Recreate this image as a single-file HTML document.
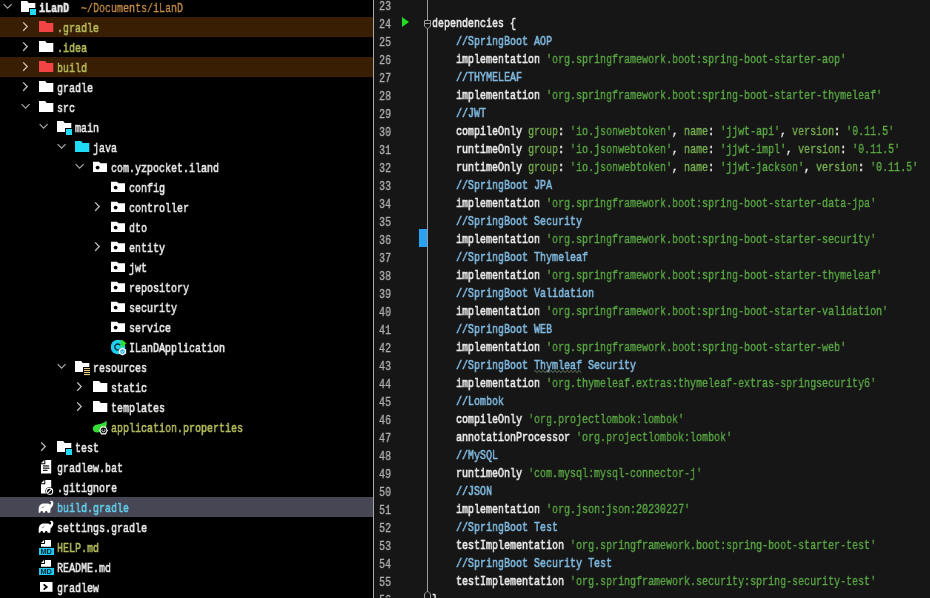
<!DOCTYPE html>
<html><head><meta charset="utf-8"><style>
html,body{margin:0;padding:0;background:#000;width:930px;height:598px;overflow:hidden}
#side{position:absolute;left:0;top:0;width:373px;height:598px;background:#000;overflow:hidden}
.row{position:absolute;left:0;width:373px;height:20px}
.ic{position:absolute;top:4px;width:16px;height:16px}
.tx{position:absolute;top:2px;height:20px;line-height:20px;white-space:pre;font-family:"Liberation Mono", monospace;font-size:13.5px;transform:scaleX(0.74074);transform-origin:0 0;-webkit-text-stroke-width:0.6px;will-change:transform}
#border{position:absolute;left:373px;top:0;width:1px;height:598px;background:#a8a8a8}
#ed{position:absolute;left:374px;top:0;width:556px;height:598px;background:#161616;overflow:hidden}
.ln{position:absolute;left:5px;margin-top:3px;width:20px;height:18px;line-height:18px;font-family:"Liberation Mono", monospace;font-size:12px;color:#b0b0b0;transform:scaleX(0.83333);transform-origin:0 0;-webkit-text-stroke-width:0.3px;will-change:transform}
.cl{position:absolute;left:58px;margin-top:2px;height:18px;line-height:18px;white-space:pre;font-family:"Liberation Mono", monospace;font-size:13.5px;transform:scaleX(0.74074);transform-origin:0 0;-webkit-text-stroke-width:0.6px;will-change:transform}
#fold{position:absolute;left:53px;top:0;width:1px;height:598px;background:#9a9a9a}
</style></head><body>
<div id="side">
<div class="row" style="top:-3px;"><svg width="10" height="7" viewBox="0 0 10 7" style="position:absolute;left:3px;top:6px"><path d="M0.6 1.2L4.6 5.2L8.6 1.2" stroke="#a8a8a8" stroke-width="1.15" fill="none"/></svg><div class="ic" style="left:21px"><svg width="16" height="15" viewBox="0 0 16 15" style="position:absolute;left:0;top:0"><path d="M0 0H6.2L7.7 2H14.3V7H8V11H0Z" fill="#ffffff"/><rect x="9" y="8" width="6" height="6" fill="#22d8f2"/></svg></div><div class="tx" style="left:39px;color:#eaeaea;font-weight:bold">iLanD<span style="font-weight:normal;color:#c98f48;-webkit-text-stroke-width:0.3px">  ~/Documents/iLanD</span></div></div><div class="row" style="top:17px;background:#3a1e03;"><svg width="8" height="12" viewBox="0 0 8 12" style="position:absolute;left:22px;top:4px"><path d="M1.2 1.4L5.2 5.6L1.2 9.8" stroke="#d6c6b4" stroke-width="1.25" fill="none"/></svg><div class="ic" style="left:39px"><svg width="15" height="12" viewBox="0 0 15 12" style="position:absolute;left:0;top:0"><path d="M0 0H6.2L7.7 2H14.3V11H0Z" fill="#f24444"/></svg></div><div class="tx" style="left:57px;color:#b4bb5c;font-weight:normal">.gradle</div></div><div class="row" style="top:37px;"><svg width="8" height="12" viewBox="0 0 8 12" style="position:absolute;left:22px;top:4px"><path d="M1.2 1.4L5.2 5.6L1.2 9.8" stroke="#c4c4c4" stroke-width="1.25" fill="none"/></svg><div class="ic" style="left:39px"><svg width="15" height="12" viewBox="0 0 15 12" style="position:absolute;left:0;top:0"><path d="M0 0H6.2L7.7 2H14.3V11H0Z" fill="#ffffff"/></svg></div><div class="tx" style="left:57px;color:#b4bb5c;font-weight:normal">.idea</div></div><div class="row" style="top:57px;background:#3a1e03;"><svg width="8" height="12" viewBox="0 0 8 12" style="position:absolute;left:22px;top:4px"><path d="M1.2 1.4L5.2 5.6L1.2 9.8" stroke="#d6c6b4" stroke-width="1.25" fill="none"/></svg><div class="ic" style="left:39px"><svg width="15" height="12" viewBox="0 0 15 12" style="position:absolute;left:0;top:0"><path d="M0 0H6.2L7.7 2H14.3V11H0Z" fill="#f24444"/></svg></div><div class="tx" style="left:57px;color:#b4bb5c;font-weight:normal">build</div></div><div class="row" style="top:77px;"><svg width="8" height="12" viewBox="0 0 8 12" style="position:absolute;left:22px;top:4px"><path d="M1.2 1.4L5.2 5.6L1.2 9.8" stroke="#c4c4c4" stroke-width="1.25" fill="none"/></svg><div class="ic" style="left:39px"><svg width="15" height="12" viewBox="0 0 15 12" style="position:absolute;left:0;top:0"><path d="M0 0H6.2L7.7 2H14.3V11H0Z" fill="#ffffff"/></svg></div><div class="tx" style="left:57px;color:#eaeaea;font-weight:normal">gradle</div></div><div class="row" style="top:97px;"><svg width="10" height="7" viewBox="0 0 10 7" style="position:absolute;left:21px;top:6px"><path d="M0.6 1.2L4.6 5.2L8.6 1.2" stroke="#a8a8a8" stroke-width="1.15" fill="none"/></svg><div class="ic" style="left:39px"><svg width="15" height="12" viewBox="0 0 15 12" style="position:absolute;left:0;top:0"><path d="M0 0H6.2L7.7 2H14.3V11H0Z" fill="#ffffff"/></svg></div><div class="tx" style="left:57px;color:#eaeaea;font-weight:normal">src</div></div><div class="row" style="top:117px;"><svg width="10" height="7" viewBox="0 0 10 7" style="position:absolute;left:39px;top:6px"><path d="M0.6 1.2L4.6 5.2L8.6 1.2" stroke="#a8a8a8" stroke-width="1.15" fill="none"/></svg><div class="ic" style="left:57px"><svg width="16" height="15" viewBox="0 0 16 15" style="position:absolute;left:0;top:0"><path d="M0 0H6.2L7.7 2H14.3V7H8V11H0Z" fill="#ffffff"/><rect x="9" y="8" width="6" height="6" fill="#22d8f2"/></svg></div><div class="tx" style="left:75px;color:#eaeaea;font-weight:normal">main</div></div><div class="row" style="top:137px;"><svg width="10" height="7" viewBox="0 0 10 7" style="position:absolute;left:57px;top:6px"><path d="M0.6 1.2L4.6 5.2L8.6 1.2" stroke="#a8a8a8" stroke-width="1.15" fill="none"/></svg><div class="ic" style="left:75px"><svg width="15" height="12" viewBox="0 0 15 12" style="position:absolute;left:0;top:0"><path d="M0 0H6.2L7.7 2H14.3V11H0Z" fill="#1edcf6"/></svg></div><div class="tx" style="left:93px;color:#eaeaea;font-weight:normal">java</div></div><div class="row" style="top:157px;"><svg width="10" height="7" viewBox="0 0 10 7" style="position:absolute;left:75px;top:6px"><path d="M0.6 1.2L4.6 5.2L8.6 1.2" stroke="#a8a8a8" stroke-width="1.15" fill="none"/></svg><div class="ic" style="left:93px"><svg width="15" height="12" viewBox="0 0 15 12" style="position:absolute;left:0;top:0"><path d="M0 0.8H6L7.5 2.3H14V11H0Z" fill="#ffffff"/><circle cx="4.6" cy="6.6" r="1.9" fill="#000"/></svg></div><div class="tx" style="left:111px;color:#eaeaea;font-weight:normal">com.yzpocket.iland</div></div><div class="row" style="top:177px;"><div class="ic" style="left:111px"><svg width="15" height="12" viewBox="0 0 15 12" style="position:absolute;left:0;top:0"><path d="M0 0.8H6L7.5 2.3H14V11H0Z" fill="#ffffff"/><circle cx="4.6" cy="6.6" r="1.9" fill="#000"/></svg></div><div class="tx" style="left:129px;color:#eaeaea;font-weight:normal">config</div></div><div class="row" style="top:197px;"><svg width="8" height="12" viewBox="0 0 8 12" style="position:absolute;left:94px;top:4px"><path d="M1.2 1.4L5.2 5.6L1.2 9.8" stroke="#c4c4c4" stroke-width="1.25" fill="none"/></svg><div class="ic" style="left:111px"><svg width="15" height="12" viewBox="0 0 15 12" style="position:absolute;left:0;top:0"><path d="M0 0.8H6L7.5 2.3H14V11H0Z" fill="#ffffff"/><circle cx="4.6" cy="6.6" r="1.9" fill="#000"/></svg></div><div class="tx" style="left:129px;color:#eaeaea;font-weight:normal">controller</div></div><div class="row" style="top:217px;"><div class="ic" style="left:111px"><svg width="15" height="12" viewBox="0 0 15 12" style="position:absolute;left:0;top:0"><path d="M0 0.8H6L7.5 2.3H14V11H0Z" fill="#ffffff"/><circle cx="4.6" cy="6.6" r="1.9" fill="#000"/></svg></div><div class="tx" style="left:129px;color:#eaeaea;font-weight:normal">dto</div></div><div class="row" style="top:237px;"><svg width="8" height="12" viewBox="0 0 8 12" style="position:absolute;left:94px;top:4px"><path d="M1.2 1.4L5.2 5.6L1.2 9.8" stroke="#c4c4c4" stroke-width="1.25" fill="none"/></svg><div class="ic" style="left:111px"><svg width="15" height="12" viewBox="0 0 15 12" style="position:absolute;left:0;top:0"><path d="M0 0.8H6L7.5 2.3H14V11H0Z" fill="#ffffff"/><circle cx="4.6" cy="6.6" r="1.9" fill="#000"/></svg></div><div class="tx" style="left:129px;color:#eaeaea;font-weight:normal">entity</div></div><div class="row" style="top:257px;"><div class="ic" style="left:111px"><svg width="15" height="12" viewBox="0 0 15 12" style="position:absolute;left:0;top:0"><path d="M0 0.8H6L7.5 2.3H14V11H0Z" fill="#ffffff"/><circle cx="4.6" cy="6.6" r="1.9" fill="#000"/></svg></div><div class="tx" style="left:129px;color:#eaeaea;font-weight:normal">jwt</div></div><div class="row" style="top:277px;"><div class="ic" style="left:111px"><svg width="15" height="12" viewBox="0 0 15 12" style="position:absolute;left:0;top:0"><path d="M0 0.8H6L7.5 2.3H14V11H0Z" fill="#ffffff"/><circle cx="4.6" cy="6.6" r="1.9" fill="#000"/></svg></div><div class="tx" style="left:129px;color:#eaeaea;font-weight:normal">repository</div></div><div class="row" style="top:297px;"><div class="ic" style="left:111px"><svg width="15" height="12" viewBox="0 0 15 12" style="position:absolute;left:0;top:0"><path d="M0 0.8H6L7.5 2.3H14V11H0Z" fill="#ffffff"/><circle cx="4.6" cy="6.6" r="1.9" fill="#000"/></svg></div><div class="tx" style="left:129px;color:#eaeaea;font-weight:normal">security</div></div><div class="row" style="top:317px;"><div class="ic" style="left:111px"><svg width="15" height="12" viewBox="0 0 15 12" style="position:absolute;left:0;top:0"><path d="M0 0.8H6L7.5 2.3H14V11H0Z" fill="#ffffff"/><circle cx="4.6" cy="6.6" r="1.9" fill="#000"/></svg></div><div class="tx" style="left:129px;color:#eaeaea;font-weight:normal">service</div></div><div class="row" style="top:337px;"><div class="ic" style="left:111px"><svg width="17" height="17" viewBox="0 0 17 17" style="position:absolute;left:0;top:-1px"><circle cx="7" cy="7" r="7.3" fill="#1ed0ee"/><path d="M9.2 5.2A3 3 0 1 0 9.2 8.8" stroke="#02303a" stroke-width="1.4" fill="none"/><path d="M10 -1L15.5 3.2L9.5 8.5Z" fill="#2ee02e"/><path d="M11.5 7.6L15.2 9.6V13.6L11.5 15.6L7.8 13.6V9.6Z" fill="#f4fbff"/><circle cx="11.5" cy="11.6" r="2.3" fill="#22b0cc"/><path d="M10.2 11.4L11.4 12.6L12.9 10.6" stroke="#e8ffff" stroke-width="0.9" fill="none"/></svg></div><div class="tx" style="left:129px;color:#eaeaea;font-weight:normal">ILanDApplication</div></div><div class="row" style="top:357px;"><svg width="10" height="7" viewBox="0 0 10 7" style="position:absolute;left:57px;top:6px"><path d="M0.6 1.2L4.6 5.2L8.6 1.2" stroke="#a8a8a8" stroke-width="1.15" fill="none"/></svg><div class="ic" style="left:75px"><svg width="16" height="15" viewBox="0 0 16 15" style="position:absolute;left:0;top:0"><path d="M0 0H6.2L7.7 2H14.3V6H8V11H0Z" fill="#ffffff"/><rect x="9" y="7" width="6" height="1.1" fill="#e6cc80"/><rect x="9" y="9" width="6" height="1.1" fill="#e6cc80"/><rect x="9" y="11" width="6" height="1.1" fill="#e6cc80"/><rect x="9" y="13" width="6" height="1.1" fill="#e6cc80"/></svg></div><div class="tx" style="left:93px;color:#eaeaea;font-weight:normal">resources</div></div><div class="row" style="top:377px;"><svg width="8" height="12" viewBox="0 0 8 12" style="position:absolute;left:76px;top:4px"><path d="M1.2 1.4L5.2 5.6L1.2 9.8" stroke="#c4c4c4" stroke-width="1.25" fill="none"/></svg><div class="ic" style="left:93px"><svg width="15" height="12" viewBox="0 0 15 12" style="position:absolute;left:0;top:0"><path d="M0 0H6.2L7.7 2H14.3V11H0Z" fill="#ffffff"/></svg></div><div class="tx" style="left:111px;color:#eaeaea;font-weight:normal">static</div></div><div class="row" style="top:397px;"><svg width="8" height="12" viewBox="0 0 8 12" style="position:absolute;left:76px;top:4px"><path d="M1.2 1.4L5.2 5.6L1.2 9.8" stroke="#c4c4c4" stroke-width="1.25" fill="none"/></svg><div class="ic" style="left:93px"><svg width="15" height="12" viewBox="0 0 15 12" style="position:absolute;left:0;top:0"><path d="M0 0H6.2L7.7 2H14.3V11H0Z" fill="#ffffff"/></svg></div><div class="tx" style="left:111px;color:#eaeaea;font-weight:normal">templates</div></div><div class="row" style="top:417px;"><div class="ic" style="left:93px"><svg width="17" height="16" viewBox="0 0 17 16" style="position:absolute;left:-1px;top:-1px"><path d="M2.6 11.9C-0.6 9.6 0.6 5.4 5.2 4.6C9.2 3.8 12 3.4 14.4 0.8C15.4 5 14.4 9 9.8 11.2C7.2 12.4 4.6 12.8 2.6 11.9Z" fill="#34dc34"/><path d="M9.2 6.4H13.8L15.8 10.4L13.8 14.4H9.2L7.2 10.4Z" fill="#fff"/><circle cx="11.5" cy="10.4" r="2.8" fill="#000"/><path d="M10.3 9.4A1.5 1.5 0 1 0 12.7 9.4" stroke="#fff" stroke-width="1" fill="none"/></svg></div><div class="tx" style="left:111px;color:#b4bb5c;font-weight:normal">application.properties</div></div><div class="row" style="top:437px;"><svg width="8" height="12" viewBox="0 0 8 12" style="position:absolute;left:40px;top:4px"><path d="M1.2 1.4L5.2 5.6L1.2 9.8" stroke="#c4c4c4" stroke-width="1.25" fill="none"/></svg><div class="ic" style="left:57px"><svg width="16" height="15" viewBox="0 0 16 15" style="position:absolute;left:0;top:0"><path d="M0 0H6.2L7.7 2H14.3V7H8V11H0Z" fill="#ffffff"/><rect x="9" y="8" width="6" height="6" fill="#22d8f2"/></svg></div><div class="tx" style="left:75px;color:#eaeaea;font-weight:normal">test</div></div><div class="row" style="top:457px;"><div class="ic" style="left:39px"><svg width="14" height="15" viewBox="0 0 14 15" style="position:absolute;left:2px;top:-1px"><path d="M4.3 0H10.2V13.6H0V4.3H4.3Z" fill="#fff"/><path d="M0 3.3L3.3 0V3.3Z" fill="#fff"/><rect x="2" y="5.4" width="6" height="1.1" fill="#000"/><rect x="2" y="7.6" width="6.5" height="1.1" fill="#000"/><rect x="2" y="9.8" width="4.5" height="1.1" fill="#000"/></svg></div><div class="tx" style="left:57px;color:#eaeaea;font-weight:normal">gradlew.bat</div></div><div class="row" style="top:477px;"><div class="ic" style="left:39px"><svg width="14" height="16" viewBox="0 0 14 16" style="position:absolute;left:2px;top:-1px"><path d="M4.3 0H10.2V13.6H0V4.3H4.3Z" fill="#fff"/><path d="M0 3.3L3.3 0V3.3Z" fill="#fff"/><circle cx="8.6" cy="11.2" r="4.2" fill="#000"/><circle cx="8.6" cy="11.2" r="3.1" fill="none" stroke="#fff" stroke-width="1.1"/><path d="M6.6 13.2L10.6 9.2" stroke="#fff" stroke-width="1.1"/></svg></div><div class="tx" style="left:57px;color:#eaeaea;font-weight:normal">.gitignore</div></div><div class="row" style="top:497px;background:#464654;"><div class="ic" style="left:39px"><svg width="18" height="14" viewBox="36 500 18 14" style="position:absolute;left:-3px;top:-1px"><path d="M38.7 512.7L38.7 509.5C38.7 505.5 40.5 503.4 44 503.4L47.5 503.4C48.8 503.4 49.6 504 50 504.8C50.8 504 51.3 503.2 51.2 502.4C51.1 501.8 50.6 501.7 50.2 502.1L49.7 501.6C50.3 500.8 51.4 500.6 52.3 501.1C53.4 501.8 53.6 503.2 53.2 504.6C52.8 506.2 51.5 507.5 50.6 508.6L50.2 512.7L47.6 512.7C47.6 511.6 47 511 46.2 511C45.4 511 44.8 511.6 44.8 512.7L43.1 512.7C43.1 511.6 42.5 511 41.7 511C40.9 511 40.3 511.6 40.3 512.7Z" fill="#fff"/><path d="M41.8 507.9C42.9 507.6 43.9 506.9 44.6 506" stroke="rgba(0,0,0,0.55)" stroke-width="0.8" fill="none"/></svg></div><div class="tx" style="left:57px;color:#62cdea;font-weight:normal">build.gradle</div></div><div class="row" style="top:517px;"><div class="ic" style="left:39px"><svg width="18" height="14" viewBox="36 500 18 14" style="position:absolute;left:-3px;top:-1px"><path d="M38.7 512.7L38.7 509.5C38.7 505.5 40.5 503.4 44 503.4L47.5 503.4C48.8 503.4 49.6 504 50 504.8C50.8 504 51.3 503.2 51.2 502.4C51.1 501.8 50.6 501.7 50.2 502.1L49.7 501.6C50.3 500.8 51.4 500.6 52.3 501.1C53.4 501.8 53.6 503.2 53.2 504.6C52.8 506.2 51.5 507.5 50.6 508.6L50.2 512.7L47.6 512.7C47.6 511.6 47 511 46.2 511C45.4 511 44.8 511.6 44.8 512.7L43.1 512.7C43.1 511.6 42.5 511 41.7 511C40.9 511 40.3 511.6 40.3 512.7Z" fill="#fff"/><path d="M41.8 507.9C42.9 507.6 43.9 506.9 44.6 506" stroke="rgba(0,0,0,0.55)" stroke-width="0.8" fill="none"/></svg></div><div class="tx" style="left:57px;color:#eaeaea;font-weight:normal">settings.gradle</div></div><div class="row" style="top:537px;"><div class="ic" style="left:39px"><svg width="16" height="16" viewBox="0 0 16 16" style="position:absolute;left:0;top:-1px"><path d="M5.9 0H12V6.8H2V4H5.9Z" fill="#fff"/><path d="M2 3L5 0V3Z" fill="#fff"/><rect x="0" y="8" width="15" height="7" fill="#1ec8f0"/><text x="7.2" y="14.2" font-family="Liberation Sans" font-weight="bold" font-size="7.4" text-anchor="middle" fill="#062030">MD</text></svg></div><div class="tx" style="left:57px;color:#b4bb5c;font-weight:normal">HELP.md</div></div><div class="row" style="top:557px;"><div class="ic" style="left:39px"><svg width="16" height="16" viewBox="0 0 16 16" style="position:absolute;left:0;top:-1px"><path d="M5.9 0H12V6.8H2V4H5.9Z" fill="#fff"/><path d="M2 3L5 0V3Z" fill="#fff"/><rect x="0" y="8" width="15" height="7" fill="#1ec8f0"/><text x="7.2" y="14.2" font-family="Liberation Sans" font-weight="bold" font-size="7.4" text-anchor="middle" fill="#062030">MD</text></svg></div><div class="tx" style="left:57px;color:#eaeaea;font-weight:normal">README.md</div></div><div class="row" style="top:577px;"><div class="ic" style="left:39px"><svg width="14" height="12" viewBox="0 0 14 12" style="position:absolute;left:0;top:0"><rect x="1" y="1" width="12.5" height="9.8" fill="#fff"/><path d="M4.6 3.4L7.8 6L4.6 8.6" stroke="#000" stroke-width="1.7" fill="none"/></svg></div><div class="tx" style="left:57px;color:#eaeaea;font-weight:normal">gradlew</div></div>
</div>
<div id="border"></div>
<div id="ed">
<div id="fold"></div>
<div class="ln" style="top:-5px">23</div><div class="cl" style="top:-5px"></div><div class="ln" style="top:13px">24</div><div class="cl" style="top:13px"><span style="color:#ececec">dependencies {</span></div><div class="ln" style="top:31px">25</div><div class="cl" style="top:31px"><span style="color:#80bae0">    //SpringBoot AOP</span></div><div class="ln" style="top:49px">26</div><div class="cl" style="top:49px"><span style="color:#ececec">    implementation </span><span style="color:#5aa844;-webkit-text-stroke-width:0.35px">'org.springframework.boot:spring-boot-starter-aop'</span></div><div class="ln" style="top:67px">27</div><div class="cl" style="top:67px"><span style="color:#80bae0">    //THYMELEAF</span></div><div class="ln" style="top:85px">28</div><div class="cl" style="top:85px"><span style="color:#ececec">    implementation </span><span style="color:#5aa844;-webkit-text-stroke-width:0.35px">'org.springframework.boot:spring-boot-starter-thymeleaf'</span></div><div class="ln" style="top:103px">29</div><div class="cl" style="top:103px"><span style="color:#80bae0">    //JWT</span></div><div class="ln" style="top:121px">30</div><div class="cl" style="top:121px"><span style="color:#ececec">    compileOnly </span><span style="color:#78b050;-webkit-text-stroke-width:0.35px">group</span><span style="color:#ececec">: </span><span style="color:#5aa844;-webkit-text-stroke-width:0.35px">'io.jsonwebtoken'</span><span style="color:#ececec">, </span><span style="color:#78b050;-webkit-text-stroke-width:0.35px">name</span><span style="color:#ececec">: </span><span style="color:#5aa844;-webkit-text-stroke-width:0.35px">'jjwt-api'</span><span style="color:#ececec">, </span><span style="color:#78b050;-webkit-text-stroke-width:0.35px">version</span><span style="color:#ececec">: </span><span style="color:#5aa844;-webkit-text-stroke-width:0.35px">'0.11.5'</span></div><div class="ln" style="top:139px">31</div><div class="cl" style="top:139px"><span style="color:#ececec">    runtimeOnly </span><span style="color:#78b050;-webkit-text-stroke-width:0.35px">group</span><span style="color:#ececec">: </span><span style="color:#5aa844;-webkit-text-stroke-width:0.35px">'io.jsonwebtoken'</span><span style="color:#ececec">, </span><span style="color:#78b050;-webkit-text-stroke-width:0.35px">name</span><span style="color:#ececec">: </span><span style="color:#5aa844;-webkit-text-stroke-width:0.35px">'jjwt-impl'</span><span style="color:#ececec">, </span><span style="color:#78b050;-webkit-text-stroke-width:0.35px">version</span><span style="color:#ececec">: </span><span style="color:#5aa844;-webkit-text-stroke-width:0.35px">'0.11.5'</span></div><div class="ln" style="top:157px">32</div><div class="cl" style="top:157px"><span style="color:#ececec">    runtimeOnly </span><span style="color:#78b050;-webkit-text-stroke-width:0.35px">group</span><span style="color:#ececec">: </span><span style="color:#5aa844;-webkit-text-stroke-width:0.35px">'io.jsonwebtoken'</span><span style="color:#ececec">, </span><span style="color:#78b050;-webkit-text-stroke-width:0.35px">name</span><span style="color:#ececec">: </span><span style="color:#5aa844;-webkit-text-stroke-width:0.35px">'jjwt-jackson'</span><span style="color:#ececec">, </span><span style="color:#78b050;-webkit-text-stroke-width:0.35px">version</span><span style="color:#ececec">: </span><span style="color:#5aa844;-webkit-text-stroke-width:0.35px">'0.11.5'</span></div><div class="ln" style="top:175px">33</div><div class="cl" style="top:175px"><span style="color:#80bae0">    //SpringBoot JPA</span></div><div class="ln" style="top:193px">34</div><div class="cl" style="top:193px"><span style="color:#ececec">    implementation </span><span style="color:#5aa844;-webkit-text-stroke-width:0.35px">'org.springframework.boot:spring-boot-starter-data-jpa'</span></div><div class="ln" style="top:211px">35</div><div class="cl" style="top:211px"><span style="color:#80bae0">    //SpringBoot Security</span></div><div class="ln" style="top:229px">36</div><div class="cl" style="top:229px"><span style="color:#ececec">    implementation </span><span style="color:#5aa844;-webkit-text-stroke-width:0.35px">'org.springframework.boot:spring-boot-starter-security'</span></div><div class="ln" style="top:247px">37</div><div class="cl" style="top:247px"><span style="color:#80bae0">    //SpringBoot Thymeleaf</span></div><div class="ln" style="top:265px">38</div><div class="cl" style="top:265px"><span style="color:#ececec">    implementation </span><span style="color:#5aa844;-webkit-text-stroke-width:0.35px">'org.springframework.boot:spring-boot-starter-thymeleaf'</span></div><div class="ln" style="top:283px">39</div><div class="cl" style="top:283px"><span style="color:#80bae0">    //SpringBoot Validation</span></div><div class="ln" style="top:301px">40</div><div class="cl" style="top:301px"><span style="color:#ececec">    implementation </span><span style="color:#5aa844;-webkit-text-stroke-width:0.35px">'org.springframework.boot:spring-boot-starter-validation'</span></div><div class="ln" style="top:319px">41</div><div class="cl" style="top:319px"><span style="color:#80bae0">    //SpringBoot WEB</span></div><div class="ln" style="top:337px">42</div><div class="cl" style="top:337px"><span style="color:#ececec">    implementation </span><span style="color:#5aa844;-webkit-text-stroke-width:0.35px">'org.springframework.boot:spring-boot-starter-web'</span></div><div class="ln" style="top:355px">43</div><div class="cl" style="top:355px"><span style="color:#80bae0">    //SpringBoot Thymleaf Security</span></div><div class="ln" style="top:373px">44</div><div class="cl" style="top:373px"><span style="color:#ececec">    implementation </span><span style="color:#5aa844;-webkit-text-stroke-width:0.35px">'org.thymeleaf.extras:thymeleaf-extras-springsecurity6'</span></div><div class="ln" style="top:391px">45</div><div class="cl" style="top:391px"><span style="color:#80bae0">    //Lombok</span></div><div class="ln" style="top:409px">46</div><div class="cl" style="top:409px"><span style="color:#ececec">    compileOnly </span><span style="color:#5aa844;-webkit-text-stroke-width:0.35px">'org.projectlombok:lombok'</span></div><div class="ln" style="top:427px">47</div><div class="cl" style="top:427px"><span style="color:#ececec">    annotationProcessor </span><span style="color:#5aa844;-webkit-text-stroke-width:0.35px">'org.projectlombok:lombok'</span></div><div class="ln" style="top:445px">48</div><div class="cl" style="top:445px"><span style="color:#80bae0">    //MySQL</span></div><div class="ln" style="top:463px">49</div><div class="cl" style="top:463px"><span style="color:#ececec">    runtimeOnly </span><span style="color:#5aa844;-webkit-text-stroke-width:0.35px">'com.mysql:mysql-connector-j'</span></div><div class="ln" style="top:481px">50</div><div class="cl" style="top:481px"><span style="color:#80bae0">    //JSON</span></div><div class="ln" style="top:499px">51</div><div class="cl" style="top:499px"><span style="color:#ececec">    implementation </span><span style="color:#5aa844;-webkit-text-stroke-width:0.35px">'org.json:json:20230227'</span></div><div class="ln" style="top:517px">52</div><div class="cl" style="top:517px"><span style="color:#80bae0">    //SpringBoot Test</span></div><div class="ln" style="top:535px">53</div><div class="cl" style="top:535px"><span style="color:#ececec">    testImplementation </span><span style="color:#5aa844;-webkit-text-stroke-width:0.35px">'org.springframework.boot:spring-boot-starter-test'</span></div><div class="ln" style="top:553px">54</div><div class="cl" style="top:553px"><span style="color:#80bae0">    //SpringBoot Security Test</span></div><div class="ln" style="top:571px">55</div><div class="cl" style="top:571px"><span style="color:#ececec">    testImplementation </span><span style="color:#5aa844;-webkit-text-stroke-width:0.35px">'org.springframework.security:spring-security-test'</span></div><div class="ln" style="top:589px">56</div><div class="cl" style="top:589px"><span style="color:#ececec">}</span></div>
<svg width="8" height="10" viewBox="0 0 8 10" style="position:absolute;left:28px;top:17px"><path d="M0 0L7 5L0 10Z" fill="#22dd22"/></svg><svg width="10" height="12" viewBox="0 0 10 12" style="position:absolute;left:49px;top:19px"><path d="M1.5 1.5H7.5V7L4.5 10L1.5 7Z" fill="#161616" stroke="#9a9a9a" stroke-width="1"/><path d="M1.5 4.5H7.5" stroke="#9a9a9a" stroke-width="1"/></svg><svg width="10" height="12" viewBox="0 0 10 12" style="position:absolute;left:49px;top:589px"><path d="M1.5 10.5H7.5V5L4.5 2L1.5 5Z" fill="#161616" stroke="#9a9a9a" stroke-width="1"/></svg>
<div style="position:absolute;left:45px;top:229px;width:8px;height:18px;background:#2aa2f2"></div>
<svg width="50" height="4" viewBox="0 0 50 4" style="position:absolute;left:160px;top:369.5px"><path d="M0 1.5L1 0.3L3 2.7L5 0.3L7 2.7L9 0.3L11 2.7L13 0.3L15 2.7L17 0.3L19 2.7L21 0.3L23 2.7L25 0.3L27 2.7L29 0.3L31 2.7L33 0.3L35 2.7L37 0.3L39 2.7L41 0.3L43 2.7L45 0.3L47 2.7" stroke="#6f8f6f" stroke-width="0.8" fill="none"/></svg>
</div>
</body></html>
